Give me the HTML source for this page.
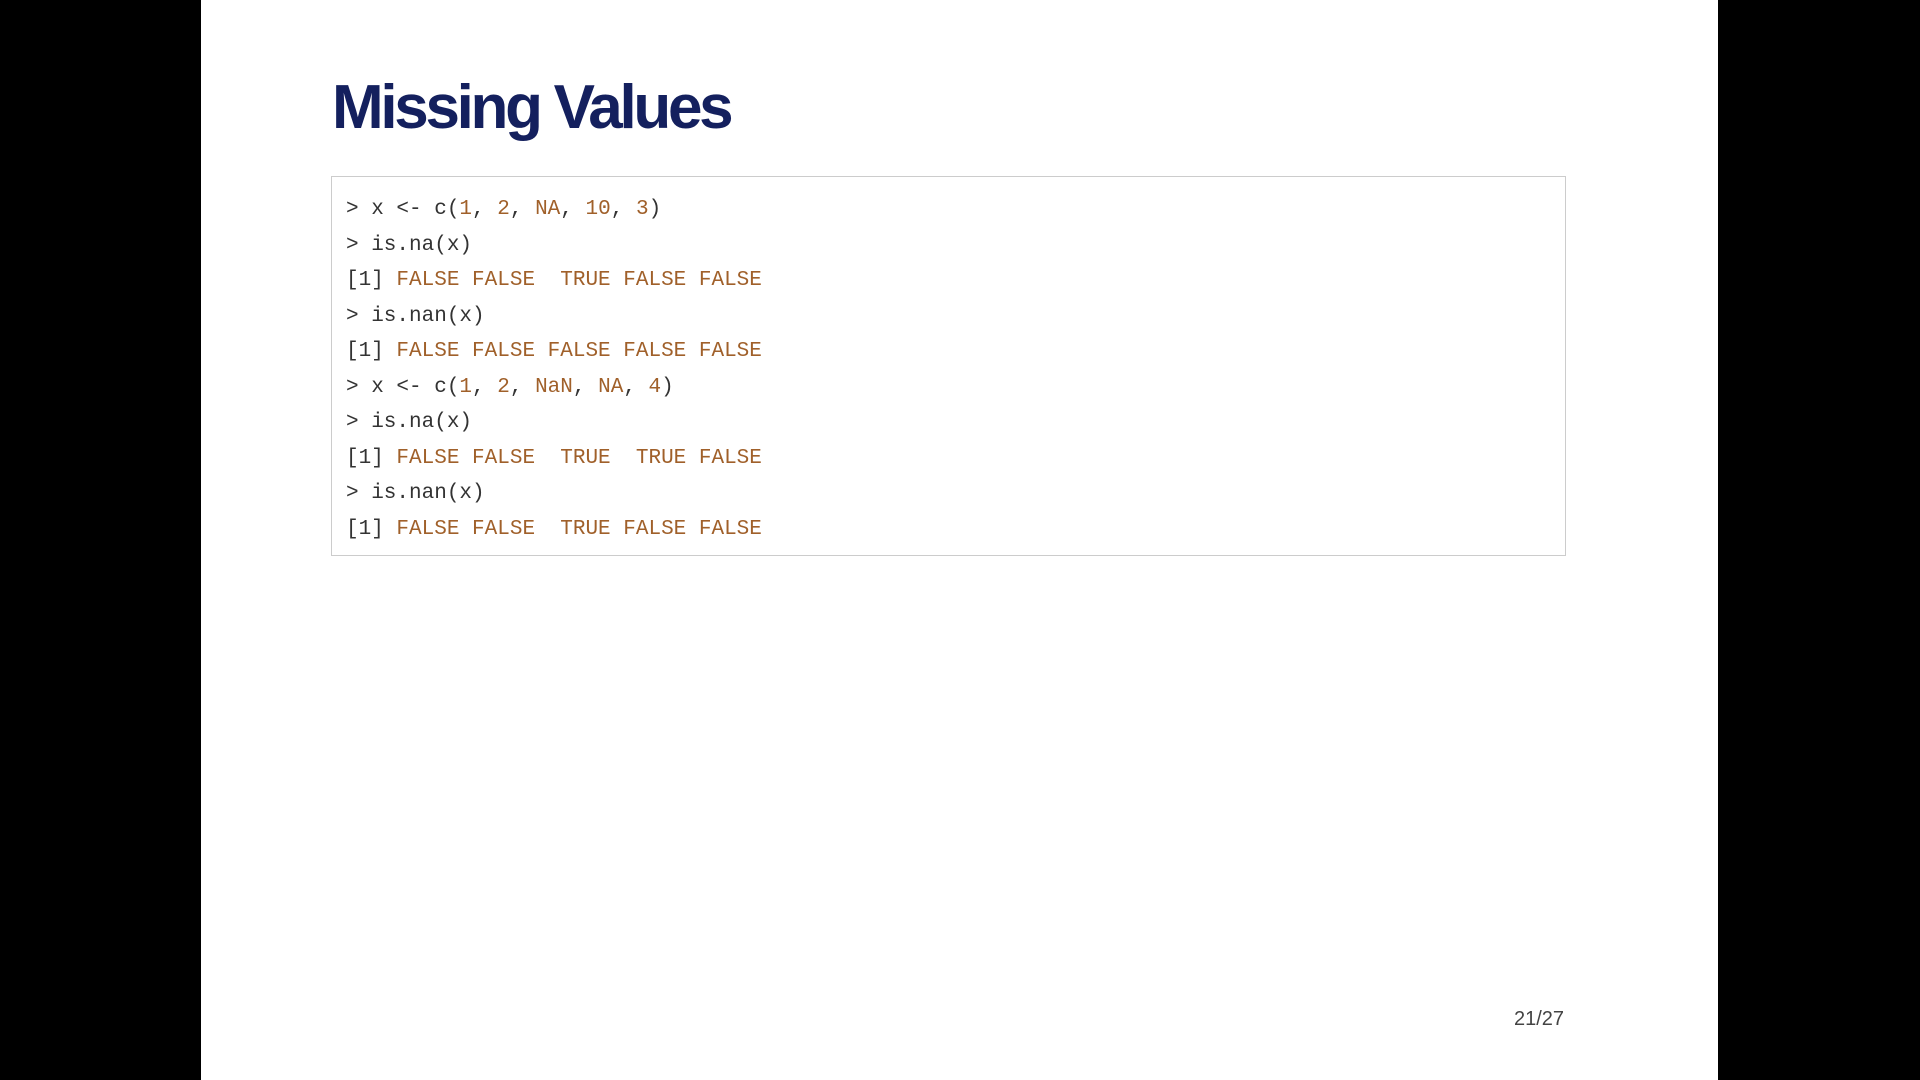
<!DOCTYPE html>
<html><head><style>
body{margin:0;width:1920px;height:1080px;background:#000;position:relative;overflow:hidden}
.page{position:absolute;left:201px;top:0;width:1517px;height:1080px;background:#fff}
h1{position:absolute;left:332px;top:72px;margin:0;font:bold 62px "Liberation Sans",sans-serif;letter-spacing:-3.3px;color:#14205e}
.box{position:absolute;left:331px;top:176px;width:1233px;height:378px;border:1.5px solid #ccc;background:#fff}
pre{margin:0;position:absolute;left:14px;top:15px;font:21px/35.5px "Liberation Mono",monospace;color:#333}
.n{color:#a0602a}
.pn{position:absolute;left:1514px;top:1008px;font:20px "Liberation Sans",sans-serif;color:#444}
</style></head><body>
<div class="page"></div>
<h1>Missing Values</h1>
<div class="box"><pre>&gt; x &lt;- c(<span class="n">1</span>, <span class="n">2</span>, <span class="n">NA</span>, <span class="n">10</span>, <span class="n">3</span>)
&gt; is.na(x)
[1] <span class="n">FALSE FALSE  TRUE FALSE FALSE</span>
&gt; is.nan(x)
[1] <span class="n">FALSE FALSE FALSE FALSE FALSE</span>
&gt; x &lt;- c(<span class="n">1</span>, <span class="n">2</span>, <span class="n">NaN</span>, <span class="n">NA</span>, <span class="n">4</span>)
&gt; is.na(x)
[1] <span class="n">FALSE FALSE  TRUE  TRUE FALSE</span>
&gt; is.nan(x)
[1] <span class="n">FALSE FALSE  TRUE FALSE FALSE</span></pre></div>
<div class="pn">21/27</div>
</body></html>
